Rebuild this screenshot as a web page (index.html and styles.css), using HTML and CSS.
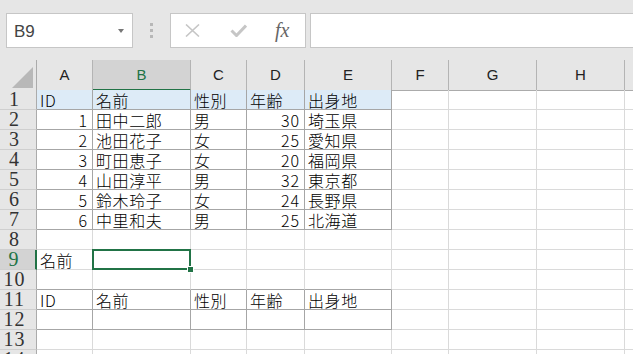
FILE: index.html
```html
<!DOCTYPE html>
<html lang="ja">
<head>
    <meta charset="UTF-8">
    <meta name="viewport" content="width=device-width, initial-scale=1.0">
    <title>Book1</title>
    <link rel="stylesheet" href="styles.css">
</head>
<body>
    <div class="toolbar">
        <div class="name-box">
            <span>B9</span>
            <span class="caret"></span>
        </div>
        <div class="grip"><i></i><i></i><i></i></div>
        <div class="fx-box">
            <svg class="icon-x" width="15" height="13" viewBox="0 0 15 13">
                <path d="M1 0.5 L14 12.5 M14 0.5 L1 12.5" stroke="#c6c6c6" stroke-width="1.6" fill="none"/>
            </svg>
            <svg class="icon-check" width="17" height="13" viewBox="0 0 17 13">
                <path d="M1.5 6.5 L6.5 11.5 L16 1.5" stroke="#c6c6c6" stroke-width="3" fill="none"/>
            </svg>
            <span class="fx">fx</span>
        </div>
        <div class="formula"></div>
    </div>

    <div class="sheet">
        <div class="row head">
            <div class="corner"><span class="tri"></span></div>
            <div class="ch">A</div>
            <div class="ch active">B</div>
            <div class="ch">C</div>
            <div class="ch">D</div>
            <div class="ch">E</div>
            <div class="ch">F</div>
            <div class="ch">G</div>
            <div class="ch">H</div>
            <div class="ch"></div>
        </div>

        <div class="row">
            <div class="rh">1</div>
            <div class="c b hd">ID</div>
            <div class="c b hd">名前</div>
            <div class="c b hd">性別</div>
            <div class="c b hd">年齢</div>
            <div class="c b hd">出身地</div>
            <div class="c"></div><div class="c"></div><div class="c"></div><div class="c"></div>
        </div>
        <div class="row">
            <div class="rh">2</div>
            <div class="c b n">1</div>
            <div class="c b">田中二郎</div>
            <div class="c b">男</div>
            <div class="c b n">30</div>
            <div class="c b">埼玉県</div>
            <div class="c"></div><div class="c"></div><div class="c"></div><div class="c"></div>
        </div>
        <div class="row">
            <div class="rh">3</div>
            <div class="c b n">2</div>
            <div class="c b">池田花子</div>
            <div class="c b">女</div>
            <div class="c b n">25</div>
            <div class="c b">愛知県</div>
            <div class="c"></div><div class="c"></div><div class="c"></div><div class="c"></div>
        </div>
        <div class="row">
            <div class="rh">4</div>
            <div class="c b n">3</div>
            <div class="c b">町田恵子</div>
            <div class="c b">女</div>
            <div class="c b n">20</div>
            <div class="c b">福岡県</div>
            <div class="c"></div><div class="c"></div><div class="c"></div><div class="c"></div>
        </div>
        <div class="row">
            <div class="rh">5</div>
            <div class="c b n">4</div>
            <div class="c b">山田淳平</div>
            <div class="c b">男</div>
            <div class="c b n">32</div>
            <div class="c b">東京都</div>
            <div class="c"></div><div class="c"></div><div class="c"></div><div class="c"></div>
        </div>
        <div class="row">
            <div class="rh">6</div>
            <div class="c b n">5</div>
            <div class="c b">鈴木玲子</div>
            <div class="c b">女</div>
            <div class="c b n">24</div>
            <div class="c b">長野県</div>
            <div class="c"></div><div class="c"></div><div class="c"></div><div class="c"></div>
        </div>
        <div class="row">
            <div class="rh">7</div>
            <div class="c b n">6</div>
            <div class="c b">中里和夫</div>
            <div class="c b">男</div>
            <div class="c b n">25</div>
            <div class="c b">北海道</div>
            <div class="c"></div><div class="c"></div><div class="c"></div><div class="c"></div>
        </div>
        <div class="row">
            <div class="rh">8</div>
            <div class="c"></div><div class="c"></div><div class="c"></div><div class="c"></div><div class="c"></div>
            <div class="c"></div><div class="c"></div><div class="c"></div><div class="c"></div>
        </div>
        <div class="row">
            <div class="rh active">9</div>
            <div class="c">名前</div>
            <div class="c selected"></div>
            <div class="c"></div><div class="c"></div><div class="c"></div>
            <div class="c"></div><div class="c"></div><div class="c"></div><div class="c"></div>
        </div>
        <div class="row">
            <div class="rh">10</div>
            <div class="c bt"></div><div class="c bt"></div><div class="c bt"></div><div class="c bt"></div><div class="c bt"></div>
            <div class="c"></div><div class="c"></div><div class="c"></div><div class="c"></div>
        </div>
        <div class="row">
            <div class="rh">11</div>
            <div class="c b">ID</div>
            <div class="c b">名前</div>
            <div class="c b">性別</div>
            <div class="c b">年齢</div>
            <div class="c b">出身地</div>
            <div class="c"></div><div class="c"></div><div class="c"></div><div class="c"></div>
        </div>
        <div class="row">
            <div class="rh">12</div>
            <div class="c b"></div><div class="c b"></div><div class="c b"></div><div class="c b"></div><div class="c b"></div>
            <div class="c"></div><div class="c"></div><div class="c"></div><div class="c"></div>
        </div>
        <div class="row">
            <div class="rh">13</div>
            <div class="c"></div><div class="c"></div><div class="c"></div><div class="c"></div><div class="c"></div>
            <div class="c"></div><div class="c"></div><div class="c"></div><div class="c"></div>
        </div>
        <div class="row">
            <div class="rh">14</div>
            <div class="c"></div><div class="c"></div><div class="c"></div><div class="c"></div><div class="c"></div>
            <div class="c"></div><div class="c"></div><div class="c"></div><div class="c"></div>
        </div>
    </div>
</body>
</html>
```

FILE: styles.css
```css
body {
    margin: 0;
    width: 633px;
    height: 354px;
    overflow: hidden;
    background: #fff;
    font-family: "Noto Sans CJK JP", sans-serif;
    color: #000;
}

/* formula bar */
.toolbar {
    display: flex;
    align-items: flex-start;
    height: 60px;
    box-sizing: border-box;
    padding: 13px 0 0 6px;
    background: #e6e6e6;
}
.name-box {
    display: flex;
    align-items: center;
    justify-content: space-between;
    width: 127px;
    height: 35px;
    box-sizing: border-box;
    padding: 3px 8px 0 7px;
    background: #fff;
    border: 1px solid #c6c6c6;
    font-family: "Liberation Sans", sans-serif;
    font-size: 17px;
    color: #444;
}
.name-box .caret {
    width: 0;
    height: 0;
    margin-top: -2px;
    border-left: 3px solid transparent;
    border-right: 3px solid transparent;
    border-top: 4px solid #777;
}
.grip {
    display: flex;
    flex-direction: column;
    gap: 3px;
    margin: 10px 0 0 17px;
}
.grip i {
    display: block;
    width: 3px;
    height: 3px;
    background: #b7b7b7;
}
.fx-box {
    display: flex;
    align-items: center;
    width: 136px;
    height: 35px;
    box-sizing: border-box;
    margin-left: 17px;
    padding-left: 14px;
    background: #fff;
    border: 1px solid #c6c6c6;
}
.fx-box .icon-check {
    margin-left: 30px;
}
.fx-box .fx {
    margin-left: 28px;
    font-family: "Liberation Serif", serif;
    font-style: italic;
    font-size: 20px;
    color: #666;
}
.formula {
    flex: 1;
    height: 35px;
    box-sizing: border-box;
    margin-left: 4px;
    background: #fff;
    border: 1px solid #c6c6c6;
    border-right: none;
}

/* sheet */
.sheet {
    --cols: 37px 56px 98px 56px 58px 87px 57px 88px 88px 80px;
    width: 633px;
    overflow: hidden;
}
.row {
    display: grid;
    grid-template-columns: var(--cols);
    height: 20px;
}
.row.head {
    height: 30px;
}
.corner {
    display: flex;
    align-items: flex-end;
    justify-content: flex-end;
    padding: 0 3px 2px 0;
    background: #e6e6e6;
    border-right: 1px solid #ababab;
    border-bottom: 1px solid #ababab;
}
.corner .tri {
    width: 0;
    height: 0;
    border-left: 21px solid transparent;
    border-bottom: 21px solid #b8b8b8;
}
.ch {
    box-sizing: border-box;
    background: #e6e6e6;
    border-right: 1px solid #b4b4b4;
    border-bottom: 1px solid #ababab;
    font-family: "Liberation Sans", sans-serif;
    font-size: 15px;
    line-height: 29px;
    text-align: center;
    color: #222;
}
.ch.active {
    background: #d3d3d3;
    border-bottom: 2px solid #217346;
    color: #217346;
}
.rh {
    box-sizing: border-box;
    overflow: hidden;
    padding-right: 7px;
    background: #e6e6e6;
    border-right: 1px solid #ababab;
    border-bottom: 1px solid #cfcfcf;
    font-family: "Liberation Serif", serif;
    font-size: 20px;
    line-height: 19px;
    letter-spacing: 1px;
    text-align: center;
    color: #333;
}
.rh.active {
    background: #d3d3d3;
    border-right: 2px solid #217346;
    color: #217346;
}
.c {
    box-sizing: border-box;
    padding: 1px 3px 0;
    border-right: 1px solid #dadada;
    border-bottom: 1px solid #dadada;
    font-size: 16px;
    font-weight: 300;
    line-height: 18px;
    letter-spacing: 0.6px;
    white-space: nowrap;
    overflow: hidden;
}
.c.n {
    text-align: right;
    padding-right: 4px;
    letter-spacing: 1px;
}
.c.hd {
    background: #ddebf7;
}
.c.b {
    border-right-color: #a6a6a6;
    border-bottom-color: #a6a6a6;
}
.c.bt {
    border-bottom-color: #a6a6a6;
}
.c.selected {
    position: relative;
    overflow: visible;
}
.c.selected::after {
    content: "";
    position: absolute;
    left: -1px;
    top: -1px;
    right: -1px;
    bottom: -1px;
    border: 2px solid #217346;
}
.c.selected::before {
    content: "";
    position: absolute;
    right: -4px;
    bottom: -4px;
    width: 5px;
    height: 5px;
    background: #217346;
    border: 1px solid #fff;
    z-index: 1;
}
```
